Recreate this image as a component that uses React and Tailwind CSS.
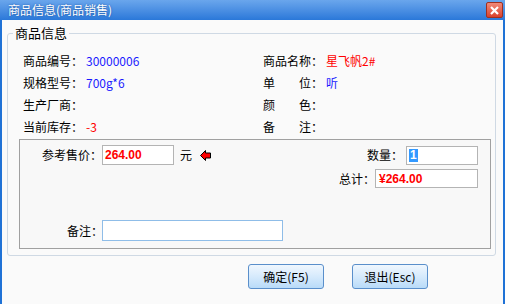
const cjk = "font-['Noto_Sans_CJK_SC','Liberation_Sans',sans-serif]";

function Arrow() {
  return (
    <svg width="11" height="11" viewBox="0 0 11 11">
      <polygon
        points="0.5,5.5 5.5,0.5 5.5,3 10.5,3 10.5,8 5.5,8 5.5,10.5"
        fill="#ff0000"
        stroke="#000"
        strokeWidth="1"
      />
    </svg>
  );
}

function Field({ label, value, color = "text-[#1a1aff]" }) {
  return (
    <div className="flex items-center whitespace-nowrap">
      <span className="text-black">{label}</span>
      <span className={`ml-[3px] ${color}`}>{value}</span>
    </div>
  );
}

function Spaced({ a, b }) {
  return (
    <span className="flex">
      <span className="w-[36px]">{a}</span>
      {b}：
    </span>
  );
}

function Btn({ children }) {
  return (
    <button className="w-[76px] h-[25px] rounded-[3px] border border-[#5a8fcb] bg-gradient-to-b from-[#f0f7fe] via-[#d6eafc] to-[#b9dbf8] text-[12px] text-black leading-none">
      {children}
    </button>
  );
}

export default function App() {
  return (
    <div className={`w-[505px] h-[304px] flex flex-col bg-[#fafafa] text-[12px] ${cjk}`}>
      <div className="h-[20px] flex items-center justify-between pl-[8px] pr-[2px] bg-gradient-to-b from-[#6aa6ec] to-[#2a78d9]">
        <span className="text-white text-[12px] leading-none [text-shadow:0_0_2px_#1a4f9a]">
          商品信息(商品销售)
        </span>
        <div className="w-[17px] h-[16px] rounded-[2px] border border-[#a03020] bg-gradient-to-b from-[#f08878] to-[#d8402c] flex items-center justify-center">
          <svg width="9" height="9" viewBox="0 0 9 9">
            <path d="M1 1L8 8M8 1L1 8" stroke="#fff" strokeWidth="2.2" />
          </svg>
        </div>
      </div>

      <div className="flex-1 flex flex-col border-x-2 border-[#1f72d6]">
        <fieldset className="mt-[6px] ml-[5px] mr-[7px] border border-[#cfd9e4] rounded-[3px] pl-[11px] pr-[4px] pb-[6px]">
          <legend className="-ml-[6px] px-[2px] text-[13px] leading-[14px] text-black">商品信息</legend>

          <div className="pt-[9px] grid grid-cols-[240px_1fr] pl-[4px]">
            <div className="h-[23px] flex items-center">
              <Field label="商品编号：" value="30000006" />
            </div>
            <div className="h-[23px] flex items-center">
              <Field label="商品名称：" value="星飞帆2#" color="text-[#ff0000]" />
            </div>
            <div className="h-[22px] flex items-center">
              <Field label="规格型号：" value="700g*6" />
            </div>
            <div className="h-[22px] flex items-center">
              <Field label={<Spaced a="单" b="位" />} value="听" />
            </div>
            <div className="h-[22px] flex items-center">
              <Field label="生产厂商：" value="" />
            </div>
            <div className="h-[22px] flex items-center">
              <Field label={<Spaced a="颜" b="色" />} value="" />
            </div>
            <div className="h-[22px] flex items-center">
              <Field label="当前库存：" value="-3" color="text-[#ff0000]" />
            </div>
            <div className="h-[22px] flex items-center">
              <Field label={<Spaced a="备" b="注" />} value="" />
            </div>
          </div>

          <div className="mt-[1px] h-[110px] border border-[#a0a0a0] bg-[#f8f8f8] flex flex-col pt-[5px] pr-[12px]">
            <div className="flex items-center justify-between h-[20px]">
              <div className="flex items-center pl-[22px] whitespace-nowrap">
                <span className="w-[60px] shrink-0">参考售价：</span>
                <div className="w-[72px] h-[20px] border border-[#b4b4b4] bg-white flex items-center pl-[2px] font-['Liberation_Sans',sans-serif] font-bold text-[12px] text-[#ff0000]">
                  264.00
                </div>
                <span className="ml-[6px]">元</span>
                <span className="ml-[8px] flex items-center">
                  <Arrow />
                </span>
              </div>
              <div className="flex items-center whitespace-nowrap">
                <span className="mr-[3px]">数量：</span>
                <div className="w-[72px] h-[19px] border border-[#b4b4b4] bg-white flex items-center pl-[2px]">
                  <span className="bg-[#3399ff] text-white px-[1px] font-['Liberation_Sans',sans-serif] font-bold leading-[13px]">
                    1
                  </span>
                </div>
              </div>
            </div>

            <div className="flex items-center justify-end h-[19px] mt-[4px] whitespace-nowrap">
              <span>总计：</span>
              <div className="w-[103px] h-[19px] border border-[#b4b4b4] bg-white flex items-center pl-[3px] font-['Liberation_Sans',sans-serif] font-bold text-[12px] text-[#ff0000]">
                ¥264.00
              </div>
            </div>

            <div className="flex items-center h-[21px] mt-[32px] pl-[47px] whitespace-nowrap">
              <span className="w-[35px] shrink-0">备注：</span>
              <input className="w-[181px] h-[21px] border border-[#8fbde8] bg-white outline-none px-[2px] text-[12px]" />
            </div>
          </div>
        </fieldset>

        <div className="flex gap-[28px] mt-[8px] pl-[246px]">
          <Btn>确定(F5)</Btn>
          <Btn>退出(Esc)</Btn>
        </div>
      </div>
    </div>
  );
}
